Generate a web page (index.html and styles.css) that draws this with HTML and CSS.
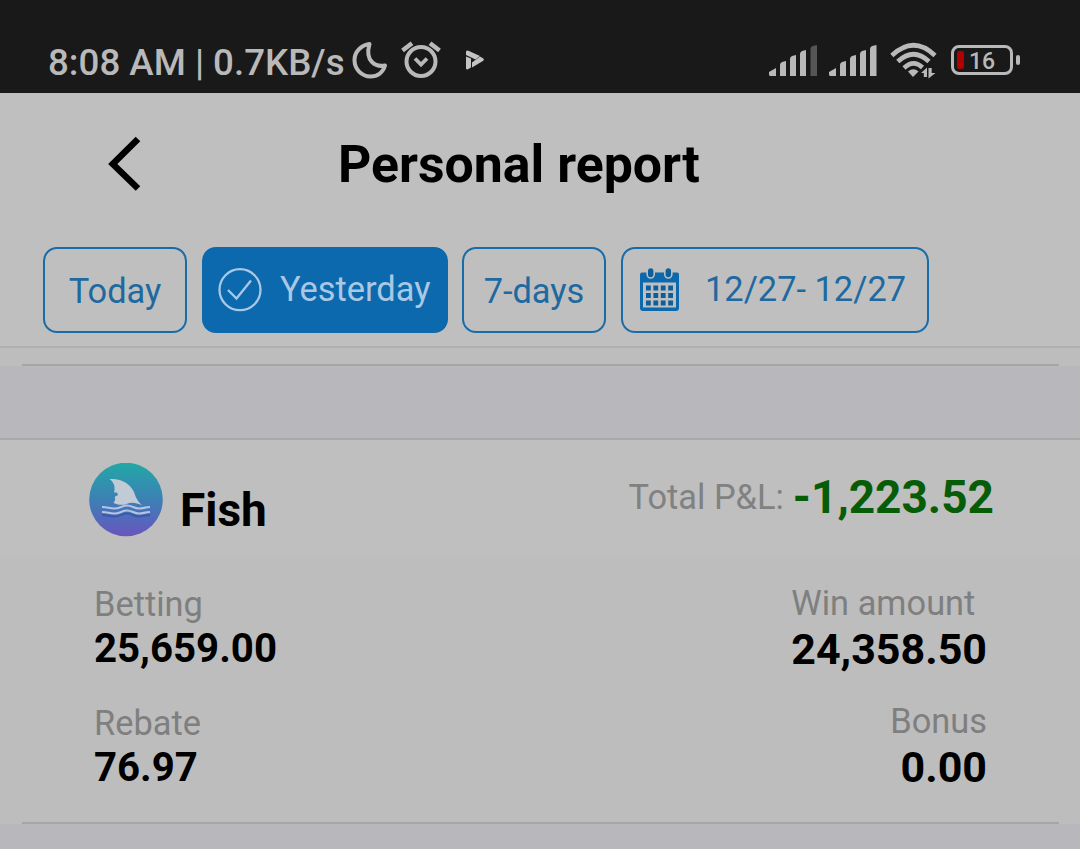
FILE: index.html
```html
<!DOCTYPE html>
<html lang="en">
<head>
    <meta charset="UTF-8">
    <meta name="viewport" content="width=device-width, initial-scale=1.0">
    <title>Personal report</title>
    <link rel="stylesheet" href="styles.css">
</head>
<body>
    <div class="status-bar">
        <div class="status-left">
            <span class="clock">8:08 AM | 0.7KB/s</span>
            <svg class="icon-moon" width="36" height="38" viewBox="0 0 36 38" fill="none" stroke="#b9b9b9" stroke-width="4" stroke-linejoin="round">
                <path d="M17.500 3C9 4 2.500 11 2.500 19c0 9 7 16.500 16 16.500 7 0 12.500-4 14.500-11-5 1-9 .5-13-3.500C16 17 15.500 10 17.500 3z"/>
            </svg>
            <svg class="icon-alarm" width="40" height="38" viewBox="0 0 40 38" fill="none" stroke="#b9b9b9" stroke-width="4">
                <circle cx="20" cy="20.500" r="14.500"/>
                <path d="M14 17.500l6 6 6-6" stroke-width="3.800"/>
                <path d="M1.500 9.500L11 2.200M38.500 9.500L29 2.200" stroke-width="4.500"/>
            </svg>
            <svg class="icon-play" width="18" height="20" viewBox="0 0 18 20" fill="#c4c4c4">
                <path d="M0 6.500L5 8.500v9L1.500 19.500 0 19z"/>
                <path d="M0 1.500Q1 0 3 1l11 5-4.500 3.500L0 5z"/>
                <path d="M14 6.500l3.300 2q1 1 0 2.300L6 17.500v-5z"/>
            </svg>
        </div>
        <div class="status-right">
            <svg class="signal" width="50" height="32" viewBox="0 0 50 32" fill="#b9b9b9">
                <path d="M0 27l7-4v8H1.500Q0 31 0 29.500zM11 20q0-2 2-3l4-1v15h-6zM21 14q0-2 2-3l4-1v21h-6zM31 9q0-2 2-3l4-1v26h-6z"/>
                <path d="M41.500 4q0-2 2-3l4.500-1v31h-6.500z" fill="#555"/>
            </svg>
            <svg class="signal signal-full" width="50" height="32" viewBox="0 0 50 32" fill="#b9b9b9">
                <path d="M0 27l7-4v8H1.500Q0 31 0 29.500zM11 20q0-2 2-3l4-1v15h-6zM21 14q0-2 2-3l4-1v21h-6zM31 9q0-2 2-3l4-1v26h-6zM41 4q0-2 2-3l4.500-1v31H41z"/>
            </svg>
            <svg class="icon-wifi" width="48" height="38" viewBox="0 0 48 38" fill="none" stroke="#b9b9b9" stroke-width="4.600">
                <path d="M1.800 13.500Q23.500-7 45 13.500"/>
                <path d="M7.800 19.500Q23.500 5 39 19.500"/>
                <path d="M14 26Q23.500 17 32.500 25.500"/>
                <path d="M18 29.500q5.500-4.500 10.500 0L23 35z" fill="#b9b9b9" stroke="none"/>
                <path d="M31 31l6-5.500V35h-3.200v-4zM38.500 26h3.200v5h3.800l-7 5.500z" fill="#b9b9b9" stroke="none"/>
            </svg>
            <div class="battery">
                <span class="battery-level"></span>
                <span class="battery-text">16</span>
            </div>
            <span class="battery-tip"></span>
        </div>
    </div>

    <div class="header">
        <div class="nav">
            <svg class="back" width="34" height="56" viewBox="0 0 34 56" fill="none" stroke="#000" stroke-width="6.500">
                <path d="M30 3L4.800 28 30 52.500"/>
            </svg>
            <h1>Personal report</h1>
        </div>
        <div class="filters">
            <div class="filter today"><span>Today</span></div>
            <div class="filter active">
                <svg width="44" height="44" viewBox="0 0 44 44" fill="none" stroke="#a9c8e4" stroke-width="2.300">
                    <circle cx="22" cy="21.700" r="20.500"/>
                    <path d="M10 22l8.500 8.500L33 12.500"/>
                </svg>
                <span>Yesterday</span>
            </div>
            <div class="filter week"><span>7-days</span></div>
            <div class="filter range">
                <svg width="39" height="44" viewBox="0 0 39 44">
                    <path fill="#0c69ae" fill-rule="evenodd" d="M2 4.500h35q2 0 2 2v33.500q0 3-3 3H3q-3 0-3-3V6.500q0-2 2-2zM3 14.500v25h33v-25z"/>
                    <g fill="#0c5f9d" stroke="#bebebe" stroke-width="1.600">
                        <rect x="7.200" y="-.5" width="7" height="10.500" rx="3.400"/>
                        <rect x="24.800" y="-.5" width="7" height="10.500" rx="3.400"/>
                    </g>
                    <path stroke="#0c5f9d" stroke-width="4.800" stroke-dasharray="4.800 2.600" d="M6 20h27.500M6 27.500h27.500M6 35h27.500"/>
                </svg>
                <span>12/27- 12/27</span>
            </div>
        </div>
    </div>

    <div class="card card-prev"></div>

    <div class="card">
        <div class="card-head">
            <svg class="game-icon" width="74" height="74" viewBox="0 0 74 74">
                <defs>
                    <linearGradient id="sea" x1="0" y1="0" x2="0" y2="1">
                        <stop offset="0" stop-color="#22a8a6"/>
                        <stop offset=".5" stop-color="#3c80b5"/>
                        <stop offset="1" stop-color="#6855be"/>
                    </linearGradient>
                </defs>
                <circle cx="37" cy="36.500" r="36.800" fill="url(#sea)"/>
                <path d="M20.500 16c12-1 21 5 24.500 13 2 6 4 10 8.500 13.500-7-3-11-3.500-16-1.500-4 1.500-8 1-13-1 2-3 2-4 1-6l3.500-2-1-2.500h-3c1.500-6 0-10-4.500-13.500z" fill="#c2cbd5"/>
                <g fill="none" stroke="#b4c5e2" stroke-width="2.200">
                    <path d="M13 44c6 0 7 1.500 12 1.500 6 0 8-3 13-3s7 3 12 3c4 0 6-1.500 11-1.500"/>
                    <path d="M13 49c6 0 7 1.500 12 1.500 6 0 8-3 13-3s7 3 12 3c4 0 6-1.500 11-1.500"/>
                </g>
                <path d="M13 52c6 0 7 1.500 12 1.500 6 0 8-3 13-3s7 3 12 3c4 0 6-1.500 11-1.500" fill="none" stroke="#3759ae" stroke-width="2"/>
            </svg>
            <span class="game-name">Fish</span>
            <div class="total">
                <span class="total-label">Total P&amp;L:</span>
                <span class="total-value">-1,223.52</span>
            </div>
        </div>
        <div class="card-body">
            <div class="col">
                <div class="item">
                    <div class="label">Betting</div>
                    <div class="value">25,659.00</div>
                </div>
                <div class="item">
                    <div class="label">Rebate</div>
                    <div class="value">76.97</div>
                </div>
            </div>
            <div class="col col-right">
                <div class="item">
                    <div class="label">Win amount</div>
                    <div class="value">24,358.50</div>
                </div>
                <div class="item">
                    <div class="label bonus">Bonus</div>
                    <div class="value">0.00</div>
                </div>
            </div>
        </div>
    </div>
</body>
</html>
```
FILE: styles.css
```css
* {
    box-sizing: border-box;
}

body {
    margin: 0;
    height: 849px;
    overflow: hidden;
    background: #b8b7bb;
    font-family: Roboto, "Liberation Sans", sans-serif;
    color: #000;
}

svg {
    display: block;
    flex: none;
}

span, .label, .value {
    white-space: nowrap;
}

/* status bar */
.status-bar {
    height: 93px;
    padding: 30px 60px 0 48px;
    display: flex;
    justify-content: space-between;
    background: #191919;
    color: #b9b9b9;
}

.status-left,
.status-right {
    display: flex;
    height: 60px;
    align-items: center;
}

.clock {
    width: 304px;
    padding-top: 5px;
    font-size: 36.7px;
    font-weight: 500;
    line-height: 60px;
}

.icon-alarm {
    margin-left: 13px;
}

.icon-play {
    margin-left: 25px;
}

.signal {
    margin-top: 1px;
}

.signal-full {
    margin-left: 10px;
}

.icon-wifi {
    margin: 1px 0 0 11px;
}

.battery {
    width: 62px;
    height: 30px;
    margin-left: 13px;
    padding: 0 3px;
    display: flex;
    align-items: center;
    border: 3px solid #b9b9b9;
    border-radius: 8px;
}

.battery-level {
    width: 7px;
    height: 18px;
    border-radius: 2px;
    background: #b00000;
}

.battery-text {
    margin: 2px 0 0 5px;
    font-size: 23px;
    font-weight: 500;
}

.battery-tip {
    width: 4px;
    height: 10px;
    margin-left: 3px;
    border-radius: 2px;
    background: #b9b9b9;
}

/* page header */
.header {
    height: 255px;
    background: #bfbfbf;
    border-bottom: 2px solid #b0b0b0;
}

.nav {
    height: 142px;
    padding-left: 108px;
    display: flex;
    align-items: center;
}

h1 {
    margin: 2px 0 0 196px;
    font-size: 51.8px;
    font-weight: 700;
    line-height: 60px;
    white-space: nowrap;
}

.filters {
    display: flex;
    gap: 14px;
    padding: 12px 0 0 43px;
}

.filter {
    height: 86px;
    display: flex;
    align-items: center;
    border: 2px solid #1a6ca8;
    border-radius: 14px;
    font-size: 34.4px;
    color: #1d69a0;
}

.today,
.week {
    width: 144px;
    padding-top: 2px;
    justify-content: center;
}

.active {
    width: 246px;
    margin-left: 1px;
    padding-left: 14px;
    background: #0c69ae;
    border-color: #0c69ae;
    color: #a9c8e4;
}

.active span {
    margin: 0 0 3px 18px;
}

.range {
    width: 308px;
    margin-left: 1px;
    padding-left: 17px;
}

.range span {
    margin: 0 0 3px 26px;
}

/* cards */
.card {
    position: relative;
    background: #bdbdbd;
    border-top: 2px solid #a9a9aa;
}

.card::after {
    content: "";
    position: absolute;
    left: 22px;
    right: 21px;
    bottom: 0;
    height: 2px;
    background: #a6a6a6;
}

.card-prev {
    height: 18px;
    margin-bottom: 72px;
    border-top: 0;
}

.card-head {
    height: 117px;
    padding: 0 86px 0 89px;
    display: flex;
    align-items: flex-start;
    background: #bfbfbf;
}

.game-icon {
    margin-top: 23px;
}

.game-name {
    margin: 40px 0 0 17px;
    font-size: 46px;
    font-weight: 700;
    line-height: 60px;
}

.total {
    margin: 26px 0 0 auto;
    display: flex;
    align-items: center;
    line-height: 60px;
}

.total-label {
    margin: 1px 9px 0 0;
    font-size: 34.4px;
    color: #818181;
}

.total-value {
    padding-top: 1px;
    font-size: 46px;
    font-weight: 700;
    color: #075d07;
}

.card-body {
    height: 267px;
    padding: 26px 93px 0 94px;
    display: flex;
    justify-content: space-between;
}

.col {
    display: flex;
    flex-direction: column;
    gap: 31px;
    line-height: 44px;
}

.col-right {
    margin-top: -3px;
    gap: 26px;
    line-height: 46px;
}

.label {
    font-size: 34.4px;
    color: #7f7f7f;
}

.col:not(.col-right) .label {
    padding-bottom: 2px;
    line-height: 42px;
}

.value {
    font-size: 40.2px;
    font-weight: 700;
}

.col-right .value {
    font-size: 43px;
    text-align: right;
}

.bonus {
    text-align: right;
}
```
